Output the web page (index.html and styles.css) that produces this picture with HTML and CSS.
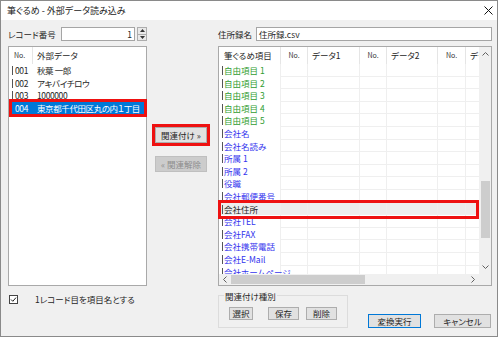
FILE: index.html
```html
<!DOCTYPE html>
<html lang="ja">
<head>
    <meta charset="UTF-8">
    <meta name="viewport" content="width=device-width, initial-scale=1.0">
    <title>筆ぐるめ - 外部データ読み込み</title>
    <link rel="stylesheet" href="styles.css">
</head>
<body>
    <div class="window">
        <div class="titlebar">
            <span>筆ぐるめ - 外部データ読み込み</span>
            <svg width="9" height="9" viewBox="0 0 9 9"><path d="M0.5 0.5L8.5 8.5M8.5 0.5L0.5 8.5" stroke="#111" stroke-width="1"/></svg>
        </div>

        <div class="content">
            <div class="field">
                <span class="field-label rec-label">レコード番号</span>
                <div class="input num-input">1</div>
                <div class="spin">
                    <span class="spin-btn"><svg width="5" height="3" viewBox="0 0 5 3"><path d="M0 3L2.5 0L5 3Z" fill="#333"/></svg></span>
                    <span class="spin-btn"><svg width="5" height="3" viewBox="0 0 5 3"><path d="M0 0L2.5 3L5 0Z" fill="#333"/></svg></span>
                </div>
            </div>
            <div></div>
            <div class="field">
                <span class="field-label file-label">住所録名</span>
                <div class="input file-input">住所録.csv</div>
            </div>

            <div class="list list-left">
                <div class="list-head"><span class="no">No.</span><span>外部データ</span></div>
                <div class="lrow"><span>001</span><span>秋葉 一郎</span></div>
                <div class="lrow"><span>002</span><span>アキバイチロウ</span></div>
                <div class="lrow"><span>003</span><span>1000000</span></div>
                <div class="lrow selected"><span>004</span><span>東京都千代田区丸の内１丁目</span></div>
            </div>

            <div class="middle">
                <button class="btn btn-link">関連付け »</button>
                <button class="btn" disabled>« 関連解除</button>
            </div>

            <div class="list list-right">
                <div class="viewport">
                    <div class="rhead">
                        <span class="first">筆ぐるめ項目</span><span class="no">No.</span><span>データ1</span><span class="no">No.</span><span>データ2</span><span class="no">No.</span><span>データ3</span>
                    </div>
                    <div class="rrow green"><span>自由項目 1</span><span></span><span></span><span></span><span></span><span></span><span></span></div>
                    <div class="rrow green"><span>自由項目 2</span><span></span><span></span><span></span><span></span><span></span><span></span></div>
                    <div class="rrow green"><span>自由項目 3</span><span></span><span></span><span></span><span></span><span></span><span></span></div>
                    <div class="rrow green"><span>自由項目 4</span><span></span><span></span><span></span><span></span><span></span><span></span></div>
                    <div class="rrow green"><span>自由項目 5</span><span></span><span></span><span></span><span></span><span></span><span></span></div>
                    <div class="rrow blue"><span>会社名</span><span></span><span></span><span></span><span></span><span></span><span></span></div>
                    <div class="rrow blue"><span>会社名読み</span><span></span><span></span><span></span><span></span><span></span><span></span></div>
                    <div class="rrow blue"><span>所属 1</span><span></span><span></span><span></span><span></span><span></span><span></span></div>
                    <div class="rrow blue"><span>所属 2</span><span></span><span></span><span></span><span></span><span></span><span></span></div>
                    <div class="rrow blue"><span>役職</span><span></span><span></span><span></span><span></span><span></span><span></span></div>
                    <div class="rrow blue"><span>会社郵便番号</span><span></span><span></span><span></span><span></span><span></span><span></span></div>
                    <div class="rrow current"><span>会社住所</span><span></span><span></span><span></span><span></span><span></span><span></span></div>
                    <div class="rrow blue"><span>会社TEL</span><span></span><span></span><span></span><span></span><span></span><span></span></div>
                    <div class="rrow blue"><span>会社FAX</span><span></span><span></span><span></span><span></span><span></span><span></span></div>
                    <div class="rrow blue"><span>会社携帯電話</span><span></span><span></span><span></span><span></span><span></span><span></span></div>
                    <div class="rrow blue"><span>会社E-Mail</span><span></span><span></span><span></span><span></span><span></span><span></span></div>
                    <div class="rrow blue"><span>会社ホームページ</span><span></span><span></span><span></span><span></span><span></span><span></span></div>
                </div>
                <div class="vscroll">
                    <span class="sb-btn"><svg width="7" height="4" viewBox="0 0 7 4"><path d="M0.5 3.5L3.5 0.5L6.5 3.5" stroke="#606060" fill="none"/></svg></span>
                    <div class="vtrack"><div class="vthumb"></div></div>
                    <span class="sb-btn"><svg width="7" height="4" viewBox="0 0 7 4"><path d="M0.5 0.5L3.5 3.5L6.5 0.5" stroke="#606060" fill="none"/></svg></span>
                </div>
                <div class="hscroll">
                    <span class="sb-btn"><svg width="4" height="7" viewBox="0 0 4 7"><path d="M3.5 0.5L0.5 3.5L3.5 6.5" stroke="#606060" fill="none"/></svg></span>
                    <div class="htrack"><div class="hthumb"></div></div>
                    <span class="sb-btn"><svg width="4" height="7" viewBox="0 0 4 7"><path d="M0.5 0.5L3.5 3.5L0.5 6.5" stroke="#606060" fill="none"/></svg></span>
                </div>
                <div class="corner"></div>
                <div class="callout"></div>
            </div>

            <div class="check-row">
                <svg width="9" height="9" viewBox="0 0 9 9"><rect x="0.5" y="0.5" width="8" height="8" fill="#fff" stroke="#444"/><path d="M2 4.5L3.8 6.3L7 2.6" stroke="#222" fill="none"/></svg>
                <span>1レコード目を項目名とする</span>
            </div>
            <div></div>
            <div class="footer">
                <div class="group">
                    <span class="group-title">関連付け種別</span>
                    <div class="group-buttons">
                        <button class="btn btn-sm sel">選択</button>
                        <button class="btn btn-sm save">保存</button>
                        <button class="btn btn-sm del">削除</button>
                    </div>
                </div>
                <button class="btn btn-run">変換実行</button>
                <button class="btn btn-cancel">キャンセル</button>
            </div>
        </div>
    </div>
</body>
</html>
```

FILE: styles.css
```css
* {
    box-sizing: border-box;
}

body {
    margin: 0;
    background-color: #ffffff;
    font-family: "Noto Sans CJK JP", "Noto Sans", sans-serif;
    font-size: 8.5px;
    color: #262626;
    font-feature-settings: "palt";
}

.window {
    width: 498px;
    height: 337px;
    border: 1px solid #8a8a8a;
    background-color: #f0f0f0;
    display: flex;
    flex-direction: column;
}

.titlebar {
    height: 19px;
    flex: none;
    background-color: #ffffff;
    display: flex;
    align-items: center;
    justify-content: space-between;
    padding: 0 4px 0 6px;
    font-size: 9px;
    color: #222;
}

.content {
    flex: 1;
    display: grid;
    grid-template-columns: 139px 71px 274px;
    grid-template-rows: 14px 240px auto;
    row-gap: 5px;
    padding: 7px 0 0 7px;
}

/* top inputs */
.field {
    display: flex;
}
.field-label {
    line-height: 14px;
    white-space: nowrap;
}
.rec-label {
    width: 53px;
}
.file-label {
    width: 38px;
}
.input {
    background-color: #ffffff;
    border: 1px solid #a5a5a5;
    line-height: 12px;
    white-space: nowrap;
}
.num-input {
    width: 74px;
    text-align: right;
    padding-right: 2px;
}
.file-input {
    flex: 1;
    padding-left: 2px;
}
.spin {
    width: 10px;
    margin-left: 2px;
    display: flex;
    flex-direction: column;
}
.spin-btn {
    flex: 1;
    border: 1px solid #adadad;
    background-color: #e9e9e9;
    display: flex;
    align-items: center;
    justify-content: center;
}
.spin-btn + .spin-btn {
    border-top: none;
}

/* lists */
.list {
    background-color: #ffffff;
    border: 1px solid #a9a9a9;
}
.list-head {
    display: grid;
    grid-template-columns: 24px 1fr;
    height: 17px;
    line-height: 17px;
}
.list-head span:first-child {
    border-right: 1px solid #e5e5e5;
    padding-left: 5px;
}
.list-head span + span {
    padding-left: 4px;
}
.no {
    font-size: 7px;
    color: #333;
}
.lrow {
    display: grid;
    grid-template-columns: 21px 1fr;
    height: 12.6px;
    line-height: 12.6px;
    margin: 0 2px 0 3px;
    white-space: nowrap;
    letter-spacing: -0.4px;
    background: linear-gradient(#555, #555) 0 2px / 1px 9px no-repeat;
}
.lrow span:first-child {
    padding-left: 3px;
}
.lrow span + span {
    padding-left: 4px;
}
.lrow.selected {
    background: #0078d7;
    color: #ffffff;
    outline: 3px solid #ee1111;
}

.list-right {
    position: relative;
    display: grid;
    grid-template-columns: 1fr 12px;
    grid-template-rows: 1fr 11px;
}
.viewport {
    overflow: hidden;
}
.rhead,
.rrow {
    display: grid;
    grid-template-columns: 62px 27px 52px 27px 51px 28px 40px;
    white-space: nowrap;
}
.rhead {
    height: 17px;
    line-height: 17px;
}
.rhead span {
    border-right: 1px solid #e5e5e5;
    overflow: hidden;
    padding-left: 4px;
}
.rhead .first {
    padding-left: 5px;
}
.rhead .no {
    padding-left: 0;
    text-align: center;
}
.rrow {
    height: 12.6px;
    line-height: 12.6px;
}
.rrow span {
    border-right: 1px solid #efefef;
    border-bottom: 1px solid #efefef;
}
.rrow span:first-child {
    border-bottom: none;
    padding-left: 5px;
    background: linear-gradient(#555, #555) 3px 2px / 1px 9px no-repeat;
}
.green {
    color: #2f9c2f;
}
.blue {
    color: #3434ee;
}
.current {
    background-color: #ededed;
    color: #222;
}

.vscroll {
    background-color: #f0f0f0;
    display: flex;
    flex-direction: column;
}
.sb-btn {
    flex: none;
    height: 14px;
    display: flex;
    align-items: center;
    justify-content: center;
}
.vtrack {
    flex: 1;
}
.vthumb {
    width: 9px;
    height: 57px;
    margin: 120px auto 0;
    background-color: #cdcdcd;
}
.hscroll {
    background-color: #f0f0f0;
    display: flex;
}
.hscroll .sb-btn {
    width: 12px;
    height: auto;
}
.htrack {
    flex: 1;
    padding: 1px 0;
}
.hthumb {
    width: 134px;
    height: 100%;
    background-color: #cdcdcd;
}
.corner {
    background-color: #f0f0f0;
}

/* red marker over the chosen row */
.callout {
    position: absolute;
    left: -1px;
    top: 153px;
    width: 261px;
    height: 19px;
    border: 3px solid #ee1111;
}

/* buttons */
.btn {
    font: inherit;
    color: #262626;
    height: 16px;
    width: 52px;
    padding: 0;
    border: 1px solid #adadad;
    background-color: #e1e1e1;
    line-height: 14px;
    white-space: nowrap;
}
.btn:disabled {
    background-color: #cccccc;
    border-color: #bfbfbf;
    color: #8d8d8d;
}
.middle {
    display: flex;
    flex-direction: column;
    align-items: flex-start;
    gap: 13px;
    padding: 81px 0 0 8px;
}
.btn-link {
    outline: 3px solid #ee1111;
}

/* bottom */
.check-row {
    display: flex;
    align-items: center;
    gap: 17px;
    padding: 3px 0 0 1px;
    align-self: start;
    line-height: 11px;
}
.footer {
    display: flex;
    align-items: flex-end;
    padding-top: 4px;
    align-self: start;
}
.group {
    width: 130px;
    height: 33px;
    border: 1px solid #dcdcdc;
}
.group-title {
    display: block;
    width: max-content;
    margin: -6px 0 0 5px;
    padding: 0 1px;
    background-color: #f0f0f0;
    line-height: 12px;
}
.group-buttons {
    display: flex;
    margin: 5px 0 0 10px;
}
.btn-sm {
    height: 13px;
    line-height: 11px;
}
.sel {
    width: 24px;
}
.save {
    width: 31px;
    margin-left: 15px;
}
.del {
    width: 31px;
    margin-left: 7px;
}
.btn-run {
    width: 53px;
    height: 14px;
    line-height: 12px;
    margin-left: 20px;
    border-color: #0078d7;
}
.btn-cancel {
    width: 57px;
    height: 14px;
    line-height: 12px;
    margin-left: 13px;
}
```
